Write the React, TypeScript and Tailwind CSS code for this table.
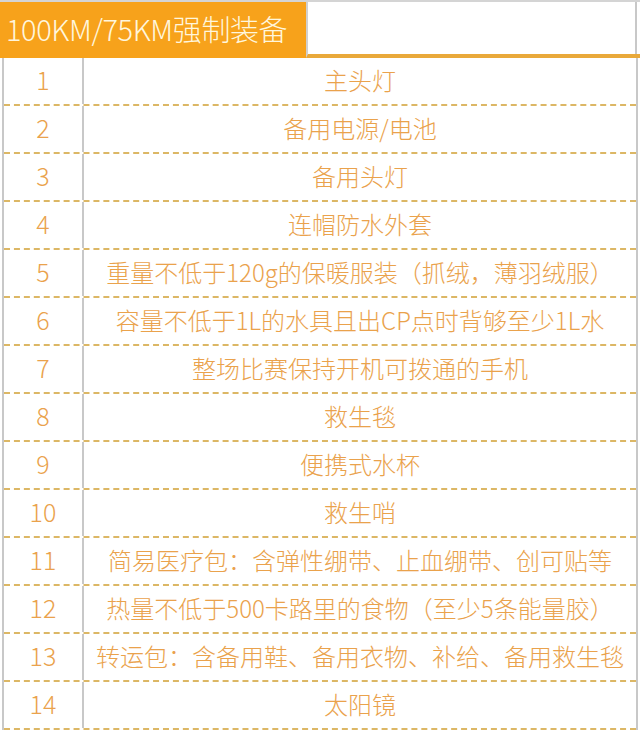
import React from "react";

const items: string[] = [
  "主头灯",
  "备用电源/电池",
  "备用头灯",
  "连帽防水外套",
  "重量不低于120g的保暖服装（抓绒，薄羽绒服）",
  "容量不低于1L的水具且出CP点时背够至少1L水",
  "整场比赛保持开机可拨通的手机",
  "救生毯",
  "便携式水杯",
  "救生哨",
  "简易医疗包：含弹性绷带、止血绷带、创可贴等",
  "热量不低于500卡路里的食物（至少5条能量胶）",
  "转运包：含备用鞋、备用衣物、补给、备用救生毯",
  "太阳镜",
];

const App: React.FC = () => {
  return (
    <div
      className="h-[732px] w-[640px] overflow-hidden bg-white"
      style={{ fontFamily: '"Noto Sans CJK SC", "Noto Sans", sans-serif' }}
    >
      <div className="flex h-[58px] border-t-2 border-[#d4d4d4]">
        <div className="flex w-[306px] items-center bg-[#f7a21b] pb-[3px] pl-[6px] text-[29px] font-light tracking-[-0.4px] text-[#fff6dc]">
          100KM/75KM强制装备
        </div>
        <div className="flex-1 border-b-[4px] border-l-2 border-[#e9a93a] border-l-[#d0d0d0] pr-[3px]">
          <div className="h-full border-r-2 border-[#c8c8c8]" />
        </div>
      </div>
      <div className="ml-[2px] mr-[2px] border-l-2 border-r-2 border-[#c8c8c8]">
        {items.map((text, i) => (
          <div
            key={i}
            className="flex h-[48px] border-b-2 border-dashed border-[#dcb765] text-[#eaa24c]"
          >
            <div className="flex w-[80px] shrink-0 items-center justify-center border-r-2 border-[#c8c8c8] pb-[3px] text-[25px] font-light">
              {i + 1}
            </div>
            <div className="flex flex-1 items-center justify-center pb-[3px] text-[24px] font-light">
              {text}
            </div>
          </div>
        ))}
      </div>
    </div>
  );
};

export default App;
